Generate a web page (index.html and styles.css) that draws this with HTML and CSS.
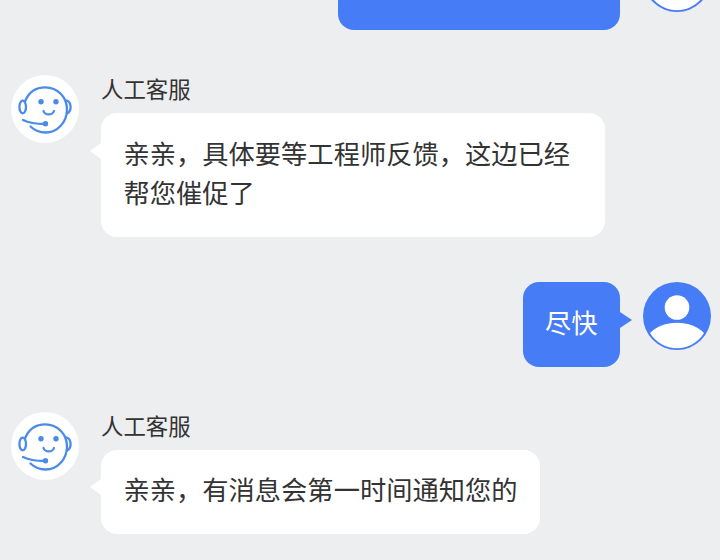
FILE: index.html
```html
<!DOCTYPE html>
<html lang="zh-CN">
<head>
<meta charset="utf-8">
<title>人工客服</title>
<link rel="stylesheet" href="styles.css">
</head>
<body>
<svg class="defs" width="0" height="0" aria-hidden="true">
  <symbol id="agent" viewBox="0 0 68 68">
    <circle cx="34" cy="34" r="34" fill="#fff"/>
    <g fill="none" stroke="#4a8bea" stroke-width="2.300" stroke-linecap="round">
      <path d="M14 26.500C17.500 17.500 25 12.300 34.300 12.300C46.500 12.300 56 22 56 34.500C56 47 46.500 57.500 34.500 57.500C28.500 57.500 23.500 55.300 19.500 51.500"/>
      <ellipse cx="11.700" cy="32" rx="3.300" ry="6.400"/>
      <path d="M55.800 25.500C58.300 26.500 59.600 29 59.600 32C59.600 35 58.300 37.500 55.800 38.500"/>
      <path d="M32.500 36C34 40.500 41.500 40.500 43 36"/>
      <path d="M12 45C17 47.500 24 49 34 49"/>
    </g>
    <g fill="#4a8bea">
      <circle cx="30" cy="26.700" r="2.700"/>
      <circle cx="45" cy="26.700" r="2.700"/>
      <circle cx="34.500" cy="48.800" r="2.700"/>
    </g>
  </symbol>
  <symbol id="user" viewBox="0 0 68 68">
    <circle cx="34" cy="34" r="34" fill="#477cf7"/>
    <circle cx="34" cy="25.500" r="12.300" fill="#fff"/>
    <path d="M7 51C13 44.500 23 40.700 34 40.700C45 40.700 55 44.500 61 51C55 60.500 45 66.300 34 66.300C23 66.300 13 60.500 7 51Z" fill="#fff"/>
  </symbol>
</svg>
<main class="chat">
  <section class="row row-out">
    <div class="bubble bubble-out bubble-cut"></div>
    <svg class="avatar"><use href="#user"/></svg>
  </section>
  <section class="row row-in">
    <svg class="avatar"><use href="#agent"/></svg>
    <div class="body">
      <div class="name">人工客服</div>
      <div class="bubble bubble-in bubble-wide">亲亲，具体要等工程师反馈，这边已经帮您催促了</div>
    </div>
  </section>
  <section class="row row-out">
    <div class="bubble bubble-out">尽快</div>
    <svg class="avatar"><use href="#user"/></svg>
  </section>
  <section class="row row-in">
    <svg class="avatar"><use href="#agent"/></svg>
    <div class="body">
      <div class="name">人工客服</div>
      <div class="bubble bubble-in">亲亲，有消息会第一时间通知您的</div>
    </div>
  </section>
</main>
</body>
</html>
```

FILE: styles.css
```css
* {
  box-sizing: border-box;
}

html,
body {
  height: 100%;
}

body {
  margin: 0;
  overflow: hidden;
  background: #edeef0;
  font-family: "Noto Sans CJK SC", "Liberation Sans", sans-serif;
}

.defs {
  display: block;
  height: 0;
}

.chat {
  display: flex;
  flex-direction: column;
  gap: 45px;
  margin-top: -56px;
  padding: 0 9px 0 11px;
}

.row {
  display: flex;
  align-items: flex-start;
}

.row-out {
  justify-content: flex-end;
  gap: 23px;
}

.row-in {
  gap: 22px;
}

.avatar {
  flex: none;
  width: 68px;
  height: 68px;
}

.name {
  height: 30px;
  margin-bottom: 8px;
  color: #333;
  font-size: 22.400px;
  line-height: 26px;
}

.bubble {
  position: relative;
  padding: 20.500px 22.500px 24.500px;
  border-radius: 16px;
  font-size: 26.280px;
  line-height: 39.600px;
}

.bubble::after {
  content: "";
  position: absolute;
  top: 29.500px;
  width: 0;
  height: 0;
  border-top: 8.500px solid transparent;
  border-bottom: 8.500px solid transparent;
}

.bubble-in {
  background: #fff;
  color: #333;
}

.bubble-in::after {
  left: -11px;
  border-right: 11px solid #fff;
}

.bubble-in.bubble-wide {
  width: 504px;
}

.bubble-out {
  padding-left: 22px;
  background: #477cf7;
  color: #fff;
}

.bubble-out::after {
  right: -12px;
  border-left: 12px solid #477cf7;
}

.bubble-cut {
  width: 282px;
  height: 86px;
}

.bubble-cut::after {
  display: none;
}
```
